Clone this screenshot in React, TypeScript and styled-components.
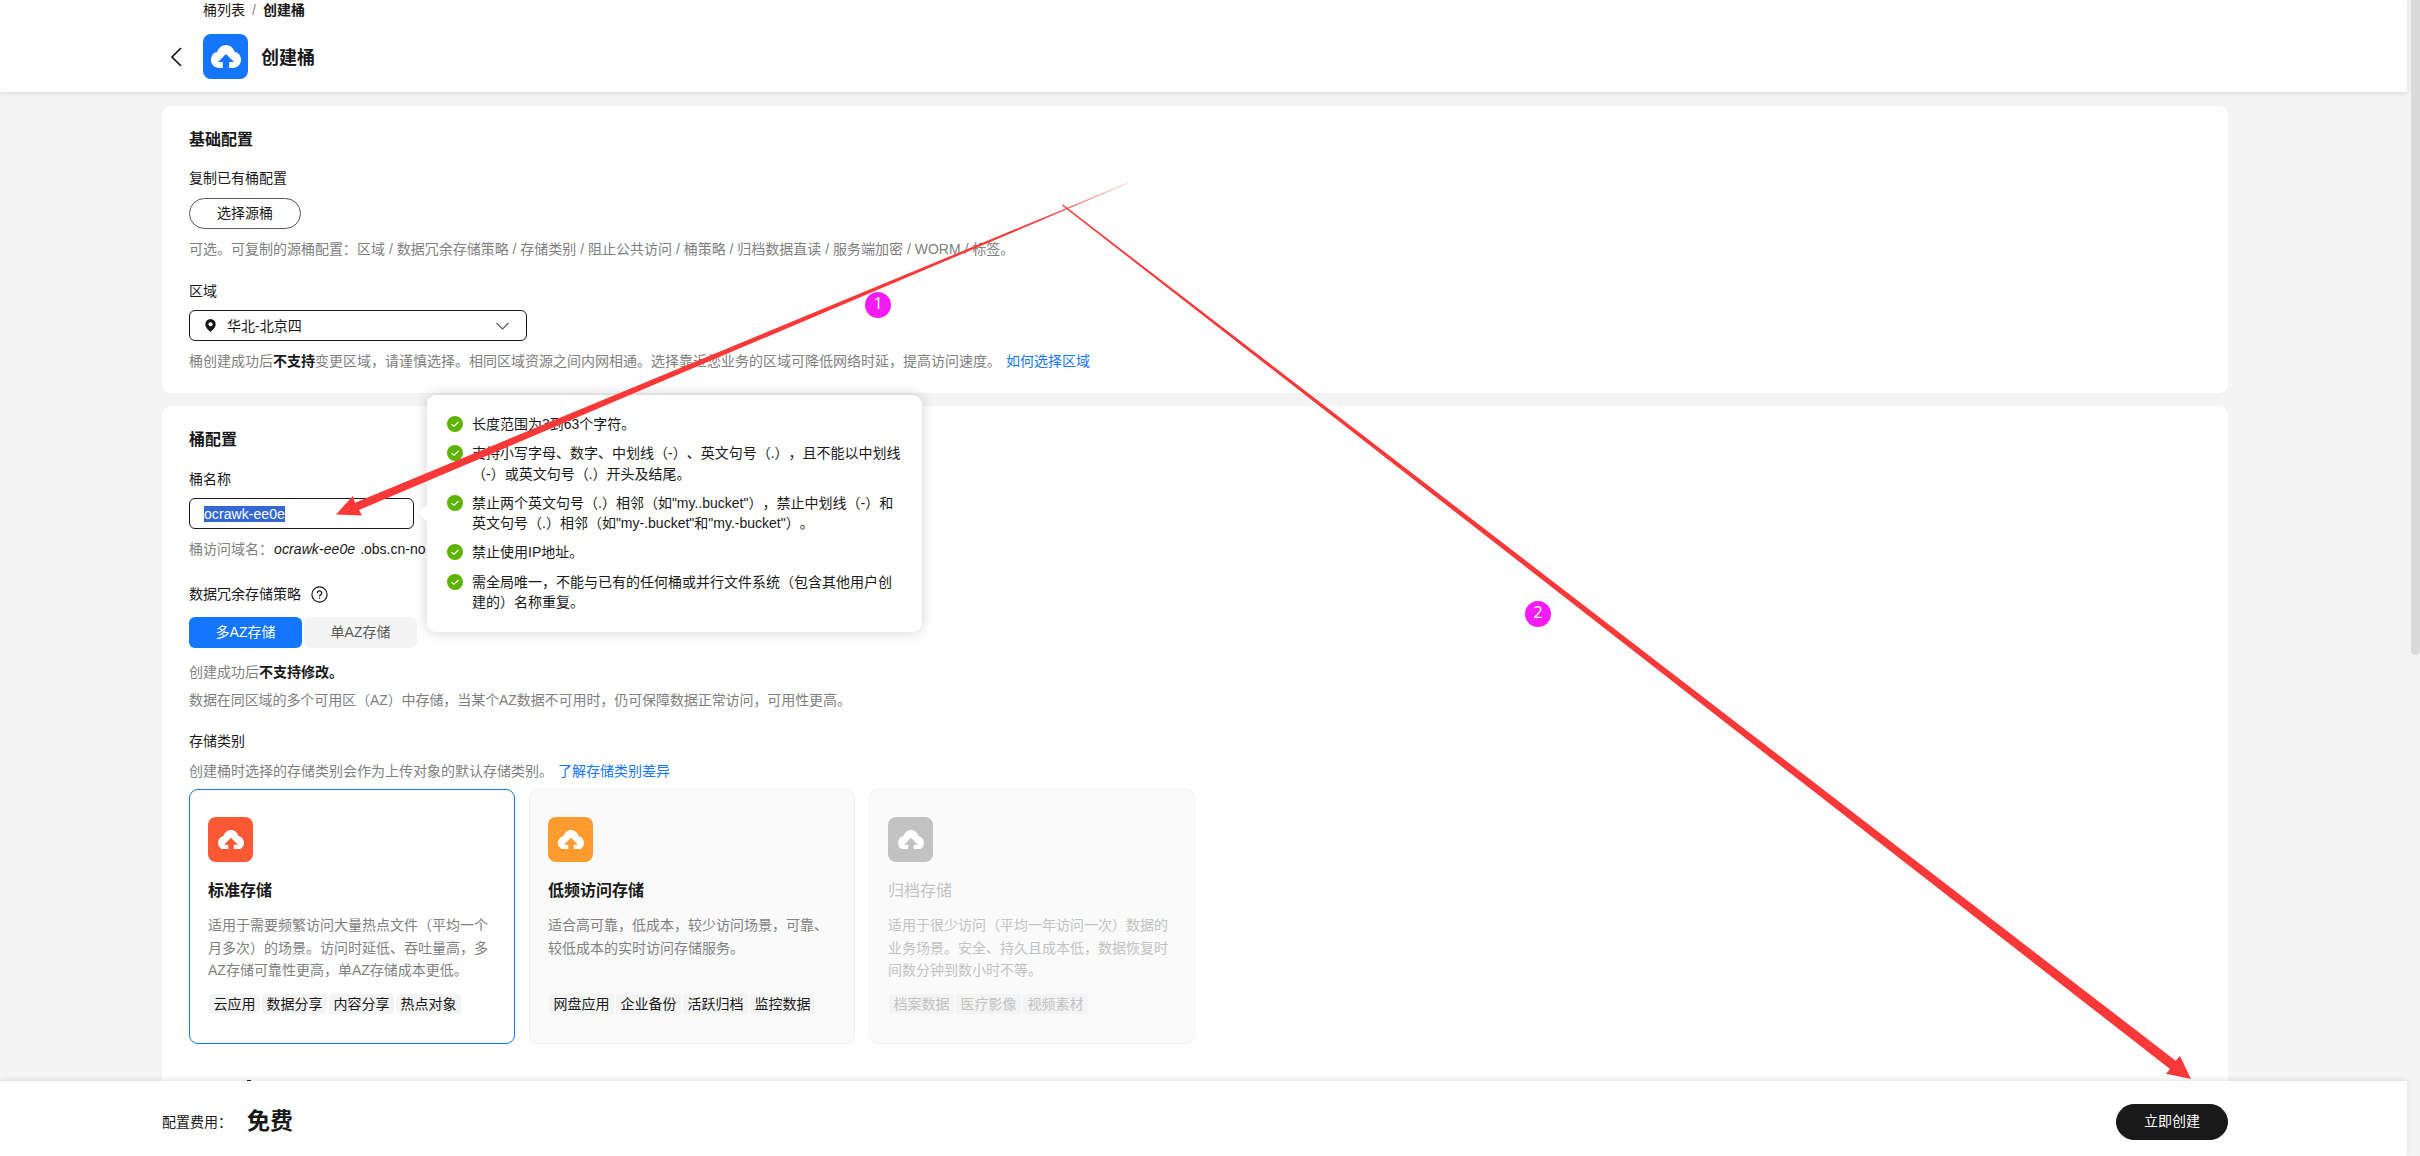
import React from 'react';
import styled, { createGlobalStyle, css } from 'styled-components';

const GlobalStyle = createGlobalStyle`
	* {
		box-sizing: border-box;
	}
	body {
		margin: 0;
		overflow: hidden;
		background: #f4f4f4;
		color: #191919;
		font-family: "Liberation Sans", "Noto Sans CJK SC", sans-serif;
		font-size: 14px;
		font-weight: 400;
		line-height: 20px;
		text-spacing-trim: space-all;
	}
`;

const Page = styled.div`
	position: relative;
	display: flex;
	width: 2420px;
	height: 1156px;
	overflow: hidden;
`;
const Main = styled.div`
	display: flex;
	flex-direction: column;
	width: 2407px;
	height: 100%;
`;
const ScrollTrack = styled.div`
	display: flex;
	justify-content: flex-end;
	width: 13px;
`;
const ScrollThumb = styled.div`
	width: 9px;
	height: 655px;
	border-bottom-left-radius: 5px;
	border-bottom-right-radius: 5px;
	background: #dadada;
`;

const Header = styled.header`
	flex: none;
	height: 92px;
	padding-left: 171px;
	background: #fff;
	box-shadow: 0 1px 5px rgba(0, 0, 0, 0.12);
	z-index: 1;
`;
const Breadcrumb = styled.nav`
	display: flex;
	gap: 7px;
	height: 20px;
	padding-left: 32px;
	span {
		color: #808080;
	}
	b {
		font-weight: 700;
	}
`;
const TitleRow = styled.div`
	display: flex;
	align-items: center;
	height: 45px;
	margin-top: 14px;
`;
const BackIcon = styled.svg`
	width: 11px;
	height: 20px;
	margin-right: 21px;
`;
const Tile = styled.div<{ $bg: string }>`
	display: flex;
	flex: none;
	align-items: center;
	justify-content: center;
	width: 45px;
	height: 45px;
	border-radius: 8px;
	background: ${({ $bg }) => $bg};
`;
const PageTitle = styled.h1`
	margin: 2px 0 0 13px;
	font-size: 18px;
	font-weight: 700;
`;

const Content = styled.div`
	display: flex;
	flex: 1;
	flex-direction: column;
	gap: 13px;
	min-height: 0;
	padding: 14px 179px 0 162px;
	overflow: hidden;
`;
const Panel = styled.section<{ $height: number }>`
	position: relative;
	display: flex;
	flex: none;
	flex-direction: column;
	align-items: flex-start;
	height: ${({ $height }) => $height}px;
	padding: 24px 27px 0;
	border-radius: 9px;
	background: #fff;
`;
const PanelTitle = styled.h2<{ $gap: number }>`
	margin: 0 0 ${({ $gap }) => $gap}px;
	font-size: 16px;
	font-weight: 700;
	line-height: 20px;
`;
const Label = styled.div<{ $top?: number }>`
	display: flex;
	align-items: center;
	gap: 10px;
	height: 20px;
	margin-top: ${({ $top }) => $top || 0}px;
`;
const Hint = styled.p<{ $top: number; $tight?: boolean }>`
	height: 20px;
	margin: ${({ $top }) => $top}px 0 0;
	color: #808080;
	letter-spacing: ${({ $tight }) => ($tight ? '-0.08px' : 'normal')};
	white-space: nowrap;
	b {
		color: #191919;
		font-weight: 700;
	}
`;
const Link = styled.a`
	margin-left: 5px;
	color: #1476ff;
`;
const Domain = styled.span`
	margin-left: 1px;
	color: #191919;
	i {
		margin-right: 1px;
		letter-spacing: 0.1px;
	}
`;

const PillButton = styled.button<{ $primary?: boolean }>`
	width: 112px;
	height: 31px;
	padding: 0 0 2px;
	border: 1px solid #595959;
	border-radius: 18px;
	background: #fff;
	color: #191919;
	font: inherit;
	${({ $primary }) =>
		$primary &&
		css`
			height: 36px;
			border-color: #191919;
			background: #191919;
			color: #fff;
		`}
`;
const CopyButton = styled(PillButton)`
	margin-top: 10px;
`;
const Select = styled.div`
	display: flex;
	align-items: center;
	width: 338px;
	height: 31px;
	margin-top: 9px;
	padding: 0 17px 0 15px;
	border: 1px solid #191919;
	border-radius: 6px;
	span {
		flex: 1;
		margin-left: 11px;
	}
`;
const NameField = styled.div`
	display: flex;
	align-items: center;
	width: 225px;
	height: 31px;
	margin-top: 9px;
	padding-left: 14px;
	border: 1px solid #191919;
	border-radius: 6px;
`;
const Selected = styled.span`
	height: 16px;
	background: #3367d1;
	color: #fff;
	letter-spacing: 0.07px;
	line-height: 16px;
`;
const Tabs = styled.div`
	display: flex;
	gap: 2px;
	margin-top: 13px;
`;
const Tab = styled.div<{ $active?: boolean }>`
	width: 113px;
	height: 31px;
	border-radius: 6px;
	background: ${({ $active }) => ($active ? '#1476ff' : '#f4f4f4')};
	color: ${({ $active }) => ($active ? '#fff' : '#595959')};
	line-height: 31px;
	text-align: center;
`;

const StorageList = styled.div`
	display: flex;
	gap: 14px;
	margin-top: 8px;
`;
const StorageCard = styled.div<{ $active?: boolean; $disabled?: boolean }>`
	display: flex;
	flex-direction: column;
	width: 326px;
	height: 255px;
	padding: 27px 18px 0;
	border: 1px solid ${({ $active }) => ($active ? '#1476ff' : '#f0f0f0')};
	border-radius: 9px;
	background: ${({ $active }) => ($active ? '#fff' : '#fafafa')};
	color: ${({ $disabled }) => ($disabled ? '#c2c2c2' : '#191919')};
`;
const StorageName = styled.h3<{ $disabled?: boolean }>`
	margin: 19px 0 13px;
	font-size: 16px;
	font-weight: ${({ $disabled }) => ($disabled ? 400 : 700)};
	line-height: 20px;
`;
const StorageText = styled.div<{ $disabled?: boolean }>`
	height: 67px;
	color: ${({ $disabled }) => ($disabled ? '#c2c2c2' : '#808080')};
	line-height: 22.5px;
	white-space: nowrap;
`;
const Tags = styled.div`
	display: flex;
	gap: 2.5px;
	margin: 13px 0 0 1px;
`;
const Tag = styled.span`
	height: 20px;
	padding: 0 4px 0 4.5px;
	border-radius: 2px;
	background: #f4f4f4;
`;

const Popover = styled.div`
	position: absolute;
	top: -11px;
	left: 265px;
	display: flex;
	flex-direction: column;
	gap: 9px;
	width: 495px;
	height: 237px;
	padding: 19px 0 0 20px;
	border-radius: 9px;
	background: #fff;
	box-shadow: 0 0 14px rgba(0, 0, 0, 0.18);
	&::before {
		position: absolute;
		top: 112px;
		left: -6px;
		width: 12px;
		height: 12px;
		background: #fff;
		transform: rotate(45deg);
		content: '';
	}
`;
const Rule = styled.div`
	display: flex;
	gap: 9px;
	line-height: 20.25px;
	white-space: nowrap;
	svg {
		flex: none;
		margin-top: 2px;
	}
`;

const Footer = styled.footer`
	display: flex;
	flex: none;
	align-items: center;
	height: 75px;
	padding: 7px 179px 0 162px;
	background: #fff;
	box-shadow: 0 -1px 5px rgba(0, 0, 0, 0.12);
	z-index: 1;
	button {
		margin-left: auto;
	}
`;
const Price = styled.strong`
	margin: -3px 0 0 15px;
	font-size: 23px;
	font-weight: 700;
	line-height: 36px;
`;

const Annotations = styled.svg`
	position: absolute;
	top: 0;
	left: 0;
	z-index: 3;
`;
const Badge = styled.div<{ $x: number; $y: number }>`
	position: absolute;
	top: ${({ $y }) => $y}px;
	left: ${({ $x }) => $x}px;
	z-index: 4;
	width: 26px;
	height: 26px;
	border-radius: 50%;
	background: #f41bf4;
	color: #fff;
	font-family: "Noto Sans", sans-serif;
	font-size: 16px;
	line-height: 23px;
	text-align: center;
`;

interface ICloud {
	color: string;
	size: number;
}

const CloudIcon: React.FC<ICloud> = ({ color, size }) => (
	<svg width={size} height={(size * 23) / 30} viewBox="0 0 30 23">
		<path
			d="M8 23C3.500 23 0 19.500 0 14.800c0-4 2.600-7.200 6.400-8C7.600 2.800 11 0 15 0s7.400 2.800 8.600 6.800c3.800.8 6.400 4 6.400 8C30 19.500 26.500 23 22 23z"
			fill="#fff"
		/>
		<path d="M15 9L23 17H18.200V23.500H11.800V17H7z" fill={color} />
	</svg>
);

const CheckIcon = () => (
	<svg width="16" height="16" viewBox="0 0 16 16">
		<circle cx="8" cy="8" r="8" fill="#5cb300" />
		<path d="M4.500 8.200L7 10.200L11.500 6" fill="none" stroke="#fff" strokeWidth="1.200" />
	</svg>
);

const rules = [
	['长度范围为3到63个字符。'],
	['支持小写字母、数字、中划线（-）、英文句号（.），且不能以中划线', '（-）或英文句号（.）开头及结尾。'],
	['禁止两个英文句号（.）相邻（如"my..bucket"），禁止中划线（-）和', '英文句号（.）相邻（如"my-.bucket"和"my.-bucket"）。'],
	['禁止使用IP地址。'],
	['需全局唯一，不能与已有的任何桶或并行文件系统（包含其他用户创', '建的）名称重复。'],
];

const storages = [
	{
		name: '标准存储',
		color: '#fa5934',
		active: true,
		text: ['适用于需要频繁访问大量热点文件（平均一个', '月多次）的场景。访问时延低、吞吐量高，多', 'AZ存储可靠性更高，单AZ存储成本更低。'],
		tags: ['云应用', '数据分享', '内容分享', '热点对象'],
	},
	{
		name: '低频访问存储',
		color: '#ff9a2e',
		text: ['适合高可靠，低成本，较少访问场景，可靠、', '较低成本的实时访问存储服务。'],
		tags: ['网盘应用', '企业备份', '活跃归档', '监控数据'],
	},
	{
		name: '归档存储',
		color: '#c2c2c2',
		disabled: true,
		text: ['适用于很少访问（平均一年访问一次）数据的', '业务场景。安全、持久且成本低，数据恢复时', '间数分钟到数小时不等。'],
		tags: ['档案数据', '医疗影像', '视频素材'],
	},
];

const App: React.FC = () => {
	return (
		<Page>
			<GlobalStyle />
			<Main>
				<Header>
					<Breadcrumb>
						桶列表 <span>/</span> <b>创建桶</b>
					</Breadcrumb>
					<TitleRow>
						<BackIcon viewBox="0 0 11 20">
							<path d="M10 1L1 10L10 19" fill="none" stroke="#191919" strokeWidth="1.700" />
						</BackIcon>
						<Tile $bg="#1476ff">
							<CloudIcon color="#1476ff" size={30} />
						</Tile>
						<PageTitle>创建桶</PageTitle>
					</TitleRow>
				</Header>

				<Content>
					<Panel $height={287}>
						<PanelTitle $gap={18}>基础配置</PanelTitle>
						<Label>复制已有桶配置</Label>
						<CopyButton>选择源桶</CopyButton>
						<Hint $top={10}>
							可选。可复制的源桶配置：区域 / 数据冗余存储策略 / 存储类别 / 阻止公共访问 / 桶策略 / 归档数据直读 / 服务端加密 / WORM / 标签。
						</Hint>
						<Label $top={22}>区域</Label>
						<Select>
							<svg width="11" height="13" viewBox="0 0 11 13">
								<path d="M5.500 0a5.200 5.200 0 0 1 5.200 5.200C10.700 8.500 7.500 11 5.500 13 3.500 11 .3 8.500 .3 5.200A5.200 5.200 0 0 1 5.500 0z" fill="#191919" />
								<circle cx="5.500" cy="5.200" r="2" fill="#fff" />
							</svg>
							<span>华北-北京四</span>
							<svg width="13" height="8" viewBox="0 0 13 8">
								<path d="M.5 1L6.500 7L12.500 1" fill="none" stroke="#595959" strokeWidth="1.100" />
							</svg>
						</Select>
						<Hint $top={10}>
							桶创建成功后<b>不支持</b>变更区域，请谨慎选择。相同区域资源之间内网相通。选择靠近您业务的区域可降低网络时延，提高访问速度。
							<Link>如何选择区域</Link>
						</Hint>
					</Panel>

					<Panel $height={760}>
						<PanelTitle $gap={19}>桶配置</PanelTitle>
						<Label>桶名称</Label>
						<NameField>
							<Selected>ocrawk-ee0e</Selected>
						</NameField>
						<Hint $top={10}>
							桶访问域名：
							<Domain>
								<i>ocrawk-ee0e</i> .obs.cn-no
							</Domain>
						</Hint>
						<Label $top={25}>
							数据冗余存储策略
							<svg width="17" height="17" viewBox="0 0 17 17" fill="none" stroke="#191919">
								<circle cx="8.500" cy="8.500" r="7.600" strokeWidth="1.200" />
								<path d="M6.300 7.200a2.200 2.200 0 1 1 3.400 1.700c-.9.6-1.200.9-1.200 1.700M8.500 11.500v1.300" strokeWidth="1.300" />
							</svg>
						</Label>
						<Tabs>
							<Tab $active>多AZ存储</Tab>
							<Tab>单AZ存储</Tab>
						</Tabs>
						<Hint $top={14}>
							创建成功后<b>不支持修改。</b>
						</Hint>
						<Hint $top={8} $tight>
							数据在同区域的多个可用区（AZ）中存储，当某个AZ数据不可用时，仍可保障数据正常访问，可用性更高。
						</Hint>
						<Label $top={21}>存储类别</Label>
						<Hint $top={10}>
							创建桶时选择的存储类别会作为上传对象的默认存储类别。
							<Link>了解存储类别差异</Link>
						</Hint>
						<StorageList>
							{storages.map((item) => (
								<StorageCard key={item.name} $active={item.active} $disabled={item.disabled}>
									<Tile $bg={item.color}>
										<CloudIcon color={item.color} size={26} />
									</Tile>
									<StorageName $disabled={item.disabled}>{item.name}</StorageName>
									<StorageText $disabled={item.disabled}>
										{item.text.map((line) => (
											<div key={line}>{line}</div>
										))}
									</StorageText>
									<Tags>
										{item.tags.map((tag) => (
											<Tag key={tag}>{tag}</Tag>
										))}
									</Tags>
								</StorageCard>
							))}
						</StorageList>
						<Popover>
							{rules.map((lines) => (
								<Rule key={lines[0]}>
									<CheckIcon />
									<div>
										{lines.map((line) => (
											<div key={line}>{line}</div>
										))}
									</div>
								</Rule>
							))}
						</Popover>
					</Panel>
				</Content>

				<Footer>
					配置费用：
					<Price>免费</Price>
					<PillButton $primary>立即创建</PillButton>
				</Footer>
			</Main>
			<ScrollTrack>
				<ScrollThumb />
			</ScrollTrack>

			<Annotations width="2420" height="1156" viewBox="0 0 2420 1156">
				<defs>
					<linearGradient id="tail" gradientUnits="userSpaceOnUse" x1="1128" y1="183" x2="1040" y2="220">
						<stop offset="0" stopColor="#fb3838" stopOpacity="0.200" />
						<stop offset="1" stopColor="#fb3838" />
					</linearGradient>
				</defs>
				<path d="M1128 182.500L355 502.700L352.700 496L336 514.500L362 515.500L359 510L1128 183.500z" fill="url(#tail)" />
				<path d="M1062 205.500L1063 204.500L2175.700 1060.700L2180 1056L2191 1079L2166 1073.700L2170 1069z" fill="#fb3838" />
				<path d="M247 1080.500h4" stroke="#191919" />
			</Annotations>
			<Badge $x={865} $y={292}>1</Badge>
			<Badge $x={1525} $y={601}>2</Badge>
		</Page>
	);
};

export default App;
